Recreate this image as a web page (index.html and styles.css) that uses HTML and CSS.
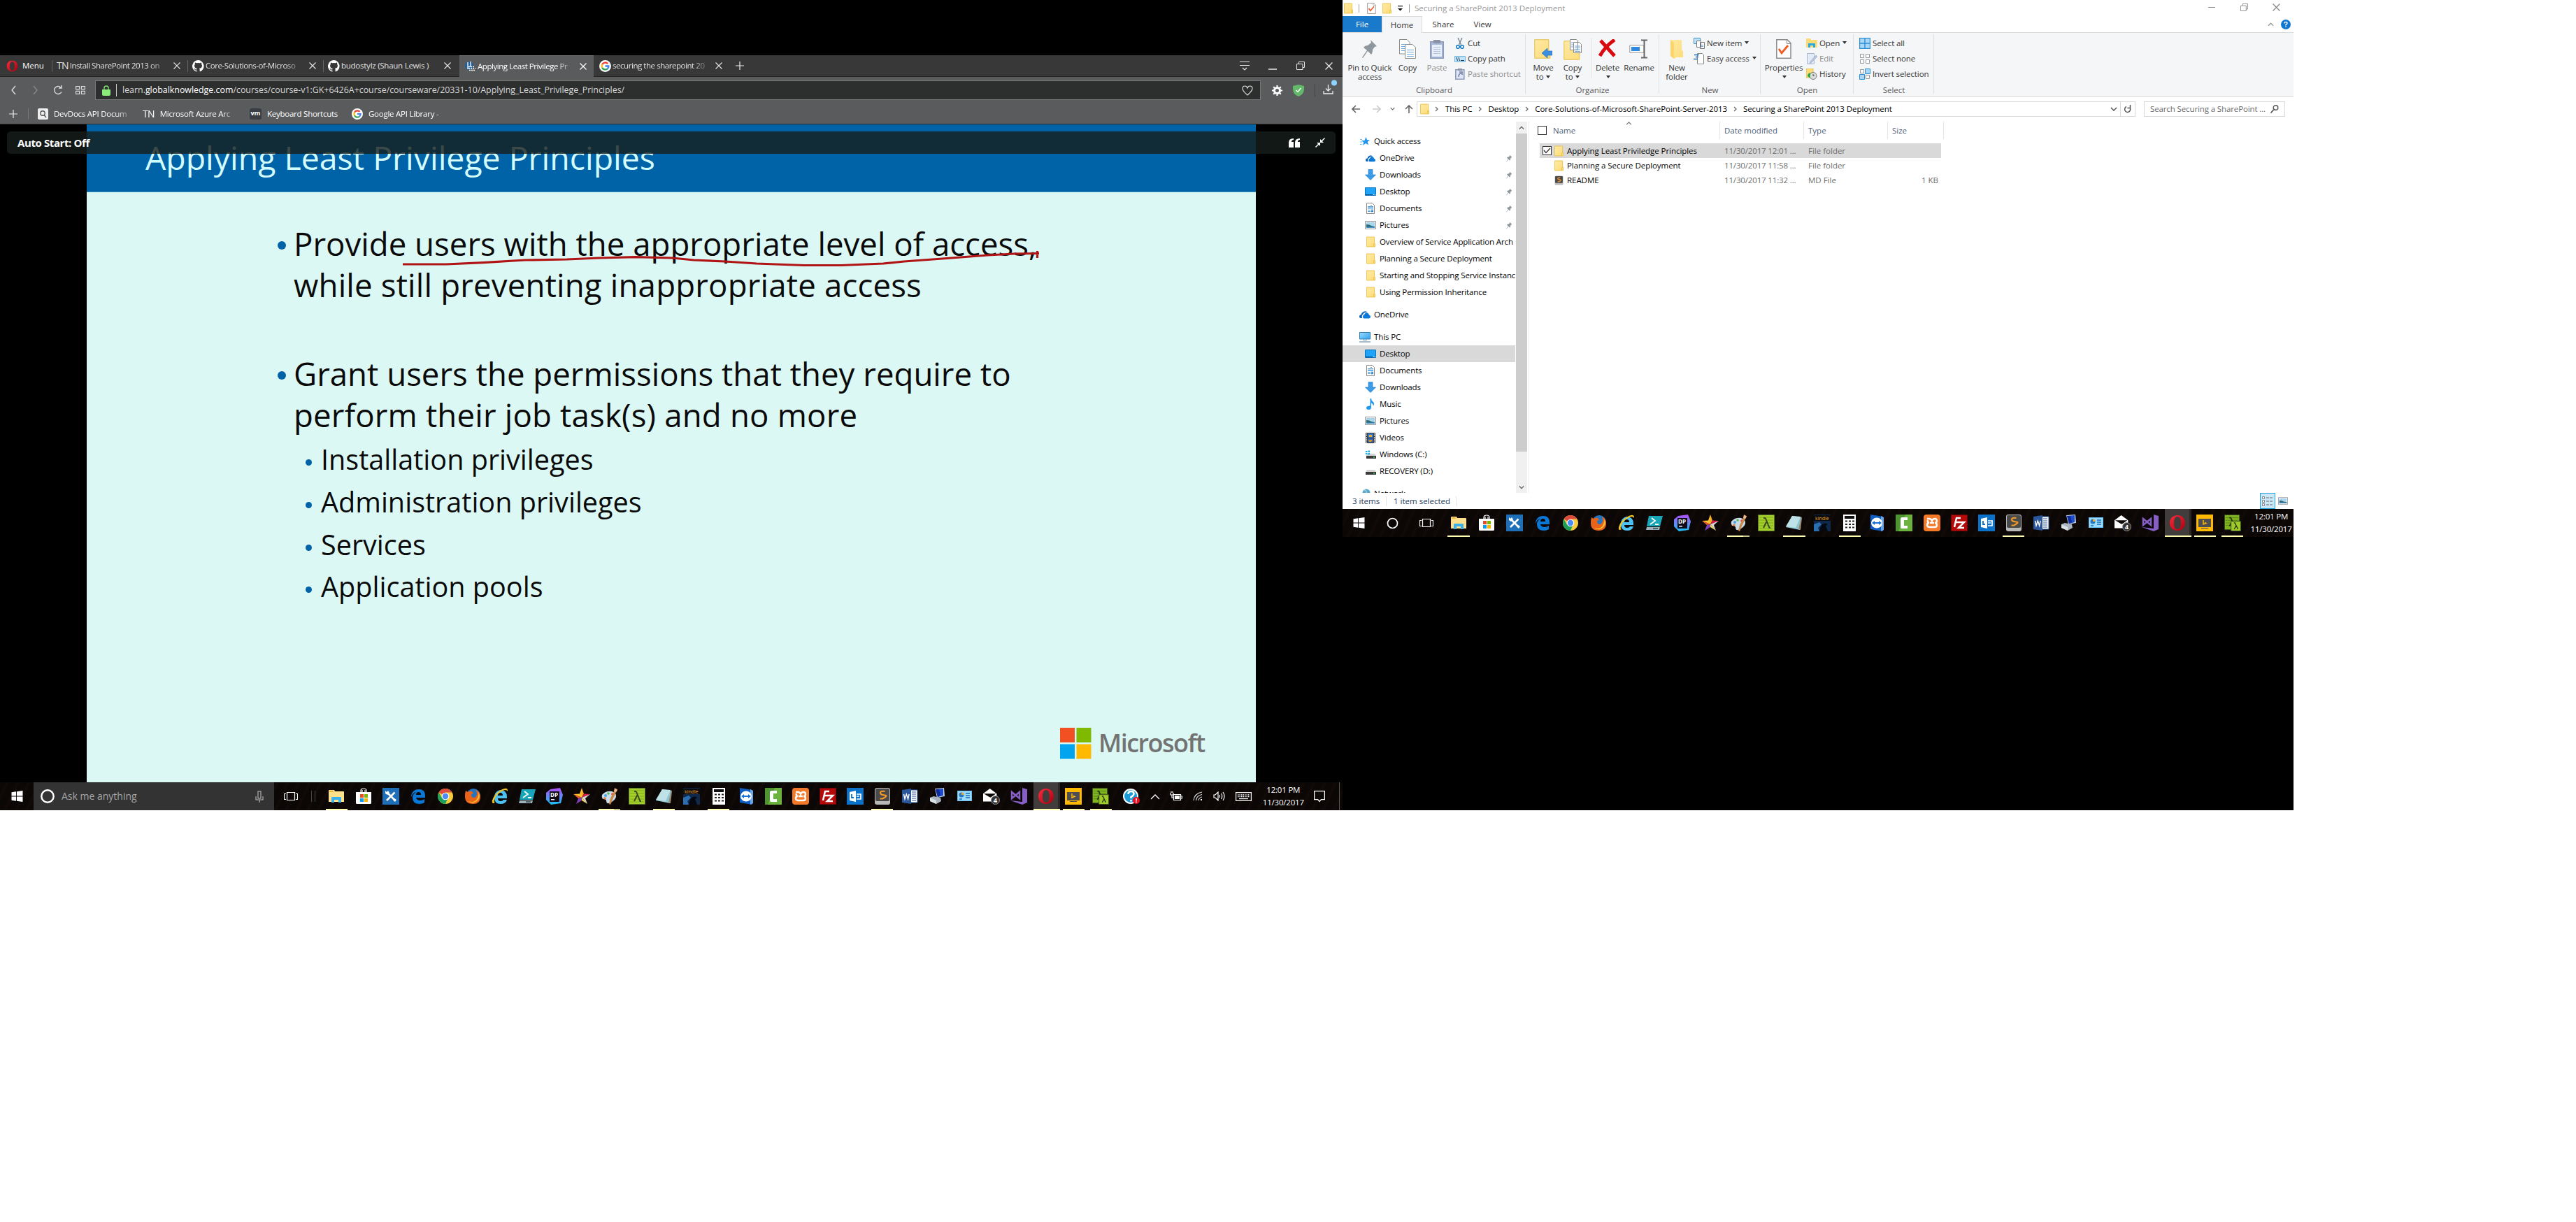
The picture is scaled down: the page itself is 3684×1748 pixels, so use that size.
FILE: index.html
```html
<!DOCTYPE html>
<html lang="en">
<head>
<meta charset="utf-8">
<title>Desktop</title>
<link rel="stylesheet" href="styles.css">
</head>
<body>
<svg class="defs" aria-hidden="true">
<defs>
<linearGradient id="gFolder" x1="0" y1="0" x2="1" y2="1"><stop offset="0" stop-color="#ffeaa5"/><stop offset="1" stop-color="#fddc78"/></linearGradient>
<linearGradient id="gMon" x1="0" y1="0" x2="1" y2="1"><stop offset="0" stop-color="#9bdcff"/><stop offset="1" stop-color="#2ea3ee"/></linearGradient>
<linearGradient id="gRed" x1="0" y1="0" x2="1" y2="1"><stop offset="0" stop-color="#ff2a3c"/><stop offset="1" stop-color="#a6000f"/></linearGradient>
<linearGradient id="gPhp" x1="0" y1="0" x2="0" y2="1"><stop offset="0" stop-color="#b44cf7"/><stop offset="1" stop-color="#19c3f5"/></linearGradient>
<symbol id="folder" viewBox="0 0 14 16"><path d="M.5.5h12v10h1v5H.5z" fill="url(#gFolder)" stroke="#e9c44d"/><path d="M11.5 15.500v-4.500h2" fill="none" stroke="#e9c44d"/></symbol>
<symbol id="win" viewBox="0 0 16 16"><path d="M0 2.300 6.600 1.300v6.200H0zM7.500 1.200 16 0v7.500H7.500zM0 8.400h6.600v6.300L0 13.700zM7.500 8.400H16V16l-8.500-1.200z" fill="#fff"/></symbol>
<symbol id="taskview" viewBox="0 0 20 16"><path d="M4.500 2.500h11v11h-11zM3 4.500H.5v8H3M17 4.500h2.500v8H17" fill="none" stroke="#fff" stroke-width="1.200"/></symbol>
<symbol id="explorer" viewBox="0 0 24 24"><path d="M1 4q0-1 1-1h7l1 2h12q1 0 1 1v14H1z" fill="#ffe08c"/><path d="M2 4h6v2H2z" fill="#e8b93c"/><path d="M5 21v-7q0-1 1-1h12q1 0 1 1v7h-4v-4h-6v4z" fill="#3cb0ea"/></symbol>
<symbol id="store" viewBox="0 0 24 24"><path d="M8 7V4q0-3 4-3t4 3v3M10 6V3M14 6V3" fill="none" stroke="#fff" stroke-width="1.200"/><path d="M1 6h22v15q0 2-1 2H2q-1 0-1-2z" fill="#fff"/><path d="M7 9h5v5H7z" fill="#ec4a23"/><path d="M13 9h5v5h-5z" fill="#7ab800"/><path d="M7 15h5v5H7z" fill="#0c9ded"/><path d="M13 15h5v5h-5z" fill="#fdb400"/></symbol>
<symbol id="tools" viewBox="0 0 24 24"><path d="M0 0h24v24H0z" fill="#1f6fb8"/><path d="m7 7 11 11M6 18 17.500 6.500" stroke="#fff" stroke-width="2.600"/><path d="M4 4v4l3 2 3-3-2-3-2 2zM17 15l3 2-2 3-3-3z" fill="#fff"/></symbol>
<symbol id="edge" viewBox="0 0 24 24"><path d="M2 11Q4 2 13 2q9 0 9 9v3H9q1 4 6 4 3 0 6-2v5q-3 2-7 2-10 0-10-9 0-5 5-8-5 1-7 7zm7-1h7q0-4-3.500-4T9 10z" fill="#0a78d4"/></symbol>
<symbol id="chrome" viewBox="0 0 24 24"><circle cx="12" cy="12" r="11" fill="#f7cb3b"/><path d="M12 12 2.500 6.500A11 11 0 0 1 21.500 6.500H12z" fill="#dd4b3e"/><path d="M12 12 7 14.500 2.500 6.500A11 11 0 0 0 12 23l4-9z" fill="#1a9f5b"/><circle cx="12" cy="12" r="5.300" fill="#fff"/><circle cx="12" cy="12" r="4.200" fill="#4c8bf5"/></symbol>
<symbol id="firefox" viewBox="0 0 24 24"><circle cx="13" cy="11" r="10" fill="#2475c0"/><path d="M2 4l3 2q3-2 6-1l2 3-3 1q0 5 4 5 4-1 4-6l-1-5q6 3 6 10 0 10-11 10T1 12q0-5 1-8z" fill="#e8641b"/><path d="M20 6q3 5 1 9t-7 6q-5 1-8-2 8 3 12-3 3-5 2-10z" fill="#f9c02c"/></symbol>
<symbol id="ie" viewBox="0 0 24 24"><path d="M12 3q10 0 10 10v2H9q0 4 4 4 3 0 4-2h5q-2 6-9 6Q4 23 4 14T12 3zM9 11h7q0-4-3.500-4T9 11z" fill="#4cc1f2"/><path d="M5 21q-5 3-4-3Q3 10 12 4q10-6 11-1v2q-2-4-9 0Q5 11 4 17q-1 4 1 4z" fill="#f6c51f"/></symbol>
<symbol id="ps" viewBox="0 0 24 24"><path d="M4 2h20l-4 15H1z" fill="#18a6b9"/><path d="M1 18h19l-1 4H0z" fill="#9fb0b8"/><path d="m8 5 5 4-7 5M13 14h5" fill="none" stroke="#fff" stroke-width="1.800"/><path d="M10 19h7v2h-7z" fill="#4f6068"/></symbol>
<symbol id="dp" viewBox="0 0 24 24"><path d="M6 2 20 0l4 10-3 12L7 24 0 17V7z" fill="url(#gPhp)"/><path d="M5 5h14v15H5z" fill="#110a18"/><text x="6" y="12.500" class="g-dp">DP</text><path d="M7 16h5v1.500H7z" fill="#fff"/></symbol>
<symbol id="star" viewBox="0 0 24 24"><path d="m12 0 3 8.500L12 14z" fill="#f5a623"/><path d="M12 0 9 8.500 0 9l12 5z" fill="#fbc02d"/><path d="m15 8.500 9 .5-12 5z" fill="#d81b4a"/><path d="m24 9-7 6 3 8-8-9z" fill="#d7d7d7"/><path d="m0 9 7 6 5-1z" fill="#ef5a28"/><path d="m7 15-3 8 8-5v-4z" fill="#7d3fb2"/><path d="m12 18 8 5-8-9z" fill="#f7dc55"/></symbol>
<symbol id="paint" viewBox="0 0 24 24"><path d="M2 10Q7 4 16 5q7 2 6 8-2 6-10 9-4 1-4-4-1-3-5-2-2-3-1-6z" fill="#c9dcea"/><circle cx="7" cy="11" r="2" fill="#4aa3df"/><circle cx="11" cy="8" r="1.800" fill="#5cb85c"/><circle cx="17" cy="9" r="1.800" fill="#e8483c"/><circle cx="6" cy="15" r="1.700" fill="#e5803c"/><path d="m21 1 3 1-7 15-3 7-2-1 2-8z" fill="#c98b4b"/><path d="m20 0 4 3-2 3-3-1z" fill="#ebb98c"/></symbol>
<symbol id="lambda" viewBox="0 0 24 24"><path d="M.5.500h23v23H.5z" fill="#a5d02a" stroke="#55702a"/><path d="M2 4h20M2 8h20M2 12h20M2 16h20M2 20h20" stroke="#7fa91f"/><path d="M8 5h2q1 0 2 3l4 10q0 1 2 1M12.500 10 8 19" fill="none" stroke="#3b4a20" stroke-width="2"/></symbol>
<symbol id="note" viewBox="0 0 24 24"><path d="m9 2 13 2-2 18-20-4z" fill="#8fc4cf"/><path d="m9 2 12 1-7 16L0 17z" fill="#bfe2e8"/><path d="m22 3 1 2-2 17-3-1z" fill="#9a8a74"/></symbol>
<symbol id="kindle" viewBox="0 0 24 24"><path d="M0 0h24v24H0z" fill="#10284a"/><path d="M0 1h24v8H0z" fill="#090b10"/><path d="M12 14q5-3 8 0l-3 2 3 8H8l2-7z" fill="#05080f"/><path d="M0 14l8-3 3 3-5 5 2 5H0z" fill="#2c6fb0"/><text x="2" y="8" class="g-kindle">kindle</text></symbol>
<symbol id="calc" viewBox="0 0 24 24"><path d="M3 0h18v24H3z" fill="#fff"/><path d="M5 2h14v4H5z" fill="#111"/><path d="M6 9.500h3m2 0h3m2 0h3M6 14h3m2 0h3m2 0h3M6 18.500h3m2 0h3m2 0h3" stroke="#222" stroke-width="2"/></symbol>
<symbol id="tv" viewBox="0 0 24 24"><path d="M3 0 21 3v21L3 21z" fill="#0e5ec4"/><path d="m18 2 4 2v18l-4 2z" fill="#6ba5e4"/><ellipse cx="12" cy="12" rx="8" ry="7.500" fill="#fff"/><path d="m5 12 4-3v2h6V9l4 3-4 3v-2H9v2z" fill="#1a72d8"/></symbol>
<symbol id="camtasia" viewBox="0 0 24 24"><path d="M0 0h24v24H0z" fill="#6cb23f"/><path d="M0 0h14L4 24H0z" fill="#4e9431"/><path d="M17 4H9Q7 4 7 7v10q0 3 2 3h8v-4h-5V8h5z" fill="#fff"/></symbol>
<symbol id="xampp" viewBox="0 0 24 24"><rect width="24" height="24" rx="4" fill="#f47a2a"/><path d="M5 6h3q3 0 4 3 1-3 4-3t3 3-3 3q3 0 3 3t-3 3H9q-4 0-4-3t3-3q-3-1-2-4M9 12h6" fill="none" stroke="#fff" stroke-width="2.400"/></symbol>
<symbol id="fz" viewBox="0 0 24 24"><path d="M.5.500h23v23H.5z" fill="#b40a0a" stroke="#7a0505" stroke-dasharray="2 1"/><path d="M14 5H8L5 18M7 11h5M11 11h8l-8 8h8" fill="none" stroke="#fff" stroke-width="2.500"/></symbol>
<symbol id="outlook" viewBox="0 0 24 24"><path d="M0 0h24v24H0z" fill="#0a72c8"/><path d="m4 6 9-2v16l-9-2z" fill="#fff"/><path d="M7 9v5h3" fill="none" stroke="#0a72c8" stroke-width="1.800"/><path d="M14 9h6v7h-6M14 12h4" fill="none" stroke="#fff" stroke-width="1.700"/></symbol>
<symbol id="sublime" viewBox="0 0 24 24"><rect x="1" width="22" height="24" rx="3" fill="#b8b8b8"/><rect x="2" y="1" width="20" height="18" rx="2" fill="#4a4a4a"/><path d="M15.500 5Q9 4 9 7t6 3.500-3 5H8.500" fill="none" stroke="#f59a28" stroke-width="2.200"/></symbol>
<symbol id="word" viewBox="0 0 24 24"><path d="M13 3h10v18H13z" fill="#fff" stroke="#2b579a"/><path d="M15 6h6M15 9h6M15 12h6M15 15h6M15 18h6" stroke="#2b579a"/><path d="m1 3 13-2v22L1 21z" fill="#2b579a"/><path d="m3.500 9 1.500 7 2.300-7 2.300 7 1.500-7" fill="none" stroke="#fff" stroke-width="1.400"/></symbol>
<symbol id="rdp" viewBox="0 0 24 24"><path d="m9 1 13-1 1 12-11 2z" fill="#c5d3e0"/><path d="m10 2 11-1v10l-8 2z" fill="#1f4bd0"/><path d="m10 2 5 0 2 9-4 2z" fill="#0e2b9a"/><path d="m2 14 5-2 10 2 1 5-7 4-9-4z" fill="#a9b4bf"/><path d="m2 14 9 4v5l-9-4z" fill="#d9e0e6"/></symbol>
<symbol id="panel" viewBox="0 0 24 24"><path d="M2 4h21v15H2z" fill="#64bdf0"/><path d="M3 5h19v13H3z" fill="#9bdbff"/><circle cx="8" cy="10" r="3.500" fill="#2477c9"/><path d="M8 10V6.500A3.500 3.500 0 0 1 11.500 10z" fill="#f5a623"/><path d="M14 8h6M14 11h6M14 14h6M5 16h4" stroke="#1c6db8" stroke-width="1.500"/></symbol>
<symbol id="mail" viewBox="0 0 26 26"><path d="m0 9 10.500-8L21 9v12H0z" fill="#fff"/><path d="M1 9h19l-8.500 6-2-1z" fill="#0b0706"/><circle cx="19" cy="19" r="6.500" fill="#333" stroke="#999"/><text x="16" y="23" class="g-four">4</text></symbol>
<symbol id="vs" viewBox="0 0 24 24"><path d="m17 0 7 2v19l-7 3-17-6 17 2z" fill="#865fc5"/><path d="m2 6 11 9V6L2 15z" fill="none" stroke="#865fc5" stroke-width="2.500"/></symbol>
<symbol id="opera" viewBox="0 0 24 24"><path fill-rule="evenodd" d="M12 1c7 0 11 5 11 11s-4 11-11 11S1 18 1 12 5 1 12 1zm0 2C8.500 3 7 7 7 12s1.500 9 5 9 5-4 5-9-1.500-9-5-9z" fill="url(#gRed)"/></symbol>
<symbol id="bing" viewBox="0 0 24 24"><path d="M0 0h24v24H0z" fill="#ffb900"/><path d="M3 6h18v12H3zM7 19h10v1H7z" fill="#4e4e52"/><path d="M10 8v6l4-1.500-2-1" fill="none" stroke="#ffb900" stroke-width="1.500"/></symbol>
<symbol id="lambda2" viewBox="0 0 26 26"><path d="M.5.500h23v23H.5z" fill="#7fb51f" stroke="#3b4a20"/><path d="M2 5h20M2 9h20M2 13h20M2 17h20" stroke="#568013"/><path d="M8 5h2l6 13M12 11 8 18" fill="none" stroke="#26350d" stroke-width="2"/><path d="M10.500 10.500h15v15h-15z" fill="#a0cc2a" stroke="#3b4a20"/><path d="M15 13h1.500l4.500 9.500M18 18l-2.500 4.500" fill="none" stroke="#26350d" stroke-width="1.500"/></symbol>
<symbol id="help" viewBox="0 0 24 24"><circle cx="11" cy="12" r="11" fill="#fff"/><circle cx="11" cy="12" r="9" fill="#1b9bd8"/><path d="M7.500 9q0-4 4-4t4 3.500q0 2-4 4.500v2M11.500 17v2.500" fill="none" stroke="#fff" stroke-width="2.500"/><circle cx="19" cy="18" r="5" fill="#e81123"/><path d="M19 15v3.500M19 19.500v1.500" stroke="#fff" stroke-width="1.500"/></symbol>
<symbol id="github" viewBox="0 0 16 16"><path fill="#fff" d="M8 0a8 8 0 0 0-2.500 15.600c.4.100.5-.2.500-.4V13.700c-2.200.5-2.700-1-2.700-1-.4-.9-.9-1.200-.9-1.200-.7-.5.100-.5.100-.5.800.100 1.200.8 1.200.8.700 1.300 1.900.9 2.300.7.100-.5.300-.9.500-1.100-1.800-.2-3.600-.9-3.600-4 0-.9.300-1.600.8-2.100-.1-.2-.4-1 .1-2.100 0 0 .7-.2 2.200.8a7.500 7.500 0 0 1 4 0c1.500-1 2.200-.8 2.200-.8.400 1.100.2 1.900.1 2.100.5.600.8 1.300.8 2.100 0 3.100-1.900 3.700-3.700 3.900.3.300.6.800.6 1.500v2.200c0 .2.100.5.600.4A8 8 0 0 0 8 0z"/></symbol>
<symbol id="google" viewBox="0 0 16 16"><circle cx="8" cy="8" r="8" fill="#fff"/><g fill="none" stroke-width="2.200"><path d="M11.500 4.800A4.700 4.700 0 0 0 3.900 5.800" stroke="#ea4335"/><path d="M3.900 5.800a4.700 4.700 0 0 0 0 4.400" stroke="#fbbc05"/><path d="M3.900 10.200a4.700 4.700 0 0 0 7.200 1.400" stroke="#34a853"/><path d="M11.100 11.600Q12.700 10 12.600 8H8" stroke="#4285f4"/></g></symbol>
<symbol id="close" viewBox="0 0 10 10"><path d="m.5.500 9 9M9.500.500l-9 9" fill="none" stroke="currentColor" stroke-width="1.200"/></symbol>
<symbol id="plus" viewBox="0 0 12 12"><path d="M6 0v12M0 6h12" stroke="#eee" stroke-width="1.200"/></symbol>
<symbol id="onedrive" viewBox="0 0 16 12"><path d="M0 9q0-3 3-3 0-3 3-4 3-2 6 1-5-1-7 3-2 1-1 5H2Q0 11 0 9z" fill="#0a5fb8"/><path d="M5 9q0-2 2-3 1-3 4-2.500Q13.500 4 14 6.500q2 .5 2 2.500T14 11.500H7Q5 11.500 5 9z" fill="#0a7ad8"/></symbol>
<symbol id="down" viewBox="0 0 16 16"><path d="M5 .500h6V8h4.500L8 15.500.500 8H5z" fill="#3b9be8" stroke="#2a7fc8" stroke-width=".7"/></symbol>
<symbol id="desktop" viewBox="0 0 16 12"><path d="M.5.500h15v11H.5z" fill="#1ea4fb" stroke="#0e72b8"/><path d="M1 10.500h10" stroke="#0a4f8a"/><path d="M12 10.500h3" stroke="#fff" stroke-dasharray="1 1"/></symbol>
<symbol id="docs" viewBox="0 0 12 16"><path d="M.5.500h8l3 3v12H.5z" fill="#fff" stroke="#8a8a8a"/><path d="M2 5.500h8M6 3.500h2M2 10.500h4M2 12.500h4" stroke="#5c9bd0"/><path d="M2 7.500h8M7 10.500h3M7 12.500h3" stroke="#1d86d8" stroke-width="1.500"/></symbol>
<symbol id="pics" viewBox="0 0 16 12"><path d="M.5.500h15v11H.5z" fill="#fff" stroke="#8f979e"/><path d="M2 2h12v8H2z" fill="#a9d5ef"/><path d="M2 5q5 0 7 2l5 1v2H2z" fill="#2f6b72"/><path d="M2 8.500h12V10H2z" fill="#4b8ec2"/></symbol>
<symbol id="pc" viewBox="0 0 16 15"><path d="M.5.500h15v9.500H.5z" fill="url(#gMon)" stroke="#2a7ab0"/><path d="M5 11.500h6" stroke="#9aa"/><path d="M0 14h16" stroke="#8aa4b8" stroke-width="1.500"/></symbol>
<symbol id="music" viewBox="0 0 12 16"><path d="M5.500 0H7q0 3 3 5 2 2 0 6-.5-4-3-4.500V13q0 3-3.500 3T0 13.500q0-3 5.500-3z" fill="#1f98ee"/></symbol>
<symbol id="video" viewBox="0 0 14 15"><path d="M0 0h14v15H0z" fill="#333"/><path d="M1.500 1v14M12.500 1v14" stroke="#fff" stroke-width="1.200" stroke-dasharray="1.500 1"/><path d="M3 1h8v6H3z" fill="#3d78c8"/><path d="M3 8h8v6H3z" fill="#3560b0"/><path d="M5 3h4v3H5z" fill="#e0b030"/><path d="M4 10h6l-2 3H5z" fill="#d09820"/></symbol>
<symbol id="drive" viewBox="0 0 15 12"><path d="M2 4h11l2 3H0z" fill="#d4d4d4"/><path d="M0 7h15v4H0z" fill="#3a3a3a"/><circle cx="12" cy="9" r=".9" fill="#3ddc55"/></symbol>
<symbol id="wdrive" viewBox="0 0 15 12"><path d="M2 5h11l2 3H1z" fill="#d4d4d4"/><path d="M1 8h14v4H1z" fill="#3a3a3a"/><circle cx="12" cy="10" r=".9" fill="#3ddc55"/><path d="M0 1h2.500v2H0zM3.500.500H6V3H3.500zM0 4h2.500v2H0zM3.500 4H6v2.500H3.500z" fill="#12b4f0"/></symbol>
<symbol id="net" viewBox="0 0 16 15"><circle cx="10" cy="6" r="5.500" fill="#5aa9c9"/><path d="M0 6h11v8H0z" fill="#4d86a3"/><path d="M7 2q4 0 3 5" fill="none" stroke="#cfeaf5"/></symbol>
<symbol id="qstar" viewBox="0 0 14 13"><path d="m8.500 0 1.500 4 4 .2-3.200 2.600 1.200 4.600-3.800-2.400L4 12l1.300-4.600L2 5h4.500z" fill="#2196ec"/><path d="M0 3.500h3M0 7h3.500M0 10.500h3" stroke="#6cb9f2"/></symbol>
<symbol id="pin" viewBox="0 0 24 28"><path d="m13 1 9 9-3 1-3 4q0 5-2 7l-5-5-7 10-1-1 7-10-5-4q2-3 6-3l5-4z" fill="#8f979e"/></symbol>
<symbol id="check" viewBox="0 0 22 28"><path d="M.8.800H16l5 5v21.400H.8z" fill="#fff" stroke="#8b8b8b" stroke-width="1.500"/><path d="M15.500 1v5.500H21" fill="none" stroke="#8b8b8b"/><path d="m4 14 4 6 9-11" fill="none" stroke="#f15a22" stroke-width="2.800"/></symbol>
<symbol id="copy" viewBox="0 0 24 28"><g fill="#fff" stroke="#8b8b8b"><path d="M.5.500H11l4 4V21H.5z"/><path d="M8.500 7.500H19l4.500 4.500v15.500h-15z"/></g><path d="M3 7.500h7M3 10.500h5M3 13.500h5M3 16.500h5M11 15.500h10M11 18.500h10M11 21.500h10M11 24.500h10" stroke="#6fa8dc"/></symbol>
<symbol id="paste" viewBox="0 0 20 28"><path d="M.8 3.800h18.400v23.400H.8z" fill="#a9b8d4" stroke="#8c9bbb" stroke-width="1.600"/><path d="M3 8h14v17H3z" fill="#e7eefa"/><path d="M5 1h10v5H5z" fill="#8b93a8"/><path d="M5 11.500h10M5 14.500h10M5 17.500h10M5 20.500h10" stroke="#b3c2df"/></symbol>
<symbol id="moveto" viewBox="0 0 26 28"><path d="M.8.800h20v17h2v9.400H.8z" fill="url(#gFolder)" stroke="#e3bd49"/><path d="m11 20 8-7v4h7v6h-7v4z" fill="#3b8fe0" stroke="#2a6fb8" stroke-width=".7"/></symbol>
<symbol id="copyto" viewBox="0 0 26 30"><path d="M.8 2.800h20v17h2v9.400H.8z" fill="url(#gFolder)" stroke="#e3bd49"/><path d="M9.500.500h9l2 2v13h-11zM14.500 4.500h8l3 3v12h-11z" fill="#fff" stroke="#8b8b8b"/><path d="M16 10h8M16 12.500h8M16 15h8M16 17.500h8M11 5h3M11 8h3M11 11h3" stroke="#6fa8dc"/></symbol>
<symbol id="delete" viewBox="0 0 26 26"><path d="m3 2 20 22M23 1Q10 10 2 24" stroke="#d8090f" stroke-width="5" fill="none"/></symbol>
<symbol id="rename" viewBox="0 0 28 28"><path d="M.8 8.800H21v10.400H.8z" fill="#fff" stroke="#999"/><path d="M3 11h12v6H3z" fill="#2d8ae0"/><path d="M17 1.500h9M17 26.500h9M21.500 2v24" stroke="#666" stroke-width="2"/></symbol>
<symbol id="newfolder" viewBox="0 0 20 28"><path d="M1 1h16v15l2 1v9H9L6 28 1 24z" fill="url(#gFolder)"/><path d="M1 1l5 4v23l-5-4z" fill="#fbd56a"/></symbol>
<symbol id="cut" viewBox="0 0 16 16"><path d="m5 0 4.500 10M11 0 6.500 10" stroke="#7c8b99" stroke-width="1.500"/><circle cx="5" cy="13" r="2.300" fill="none" stroke="#1b7fc4" stroke-width="1.600"/><circle cx="11" cy="13" r="2.300" fill="none" stroke="#1b7fc4" stroke-width="1.600"/></symbol>
<symbol id="cpath" viewBox="0 0 16 16"><path d="M.5 4.500h15v8H.5z" fill="#bfe3fa" stroke="#6fb3dd"/><path d="m3 6 1.500 5M6 6l1.500 5M9 10.500h5" stroke="#234"/></symbol>
<symbol id="shortcut" viewBox="0 0 16 16"><path d="M1.800 1.800h12v13.400h-12z" fill="#dfe7f4" stroke="#8c9bbb" stroke-width="1.600"/><path d="M5 0h6v3H5z" fill="#8b93a8"/><path d="M6 12q0-5 4-5M7 5h4v4" fill="none" stroke="#6f7fa5" stroke-width="1.500"/></symbol>
<symbol id="newitem" viewBox="0 0 16 16"><path d="M.5.500h9v8h-9z" fill="#bfe3fa" stroke="#4c8fb8"/><path d="M4.500 4.500h6v9h-6zM9.500 6.500h6v9h-6z" fill="#fff" stroke="#777"/><path d="M11 10.500h3M11 12.500h3" stroke="#6fa8dc"/></symbol>
<symbol id="easy" viewBox="0 0 16 16"><path d="M5.500.500h7l2 2v13h-9z" fill="#fff" stroke="#888"/><path d="M1 2.500h7M3 5.500h4M0 8.500h6" stroke="#2a6fb8" stroke-width="1.300"/></symbol>
<symbol id="open" viewBox="0 0 16 16"><path d="M0 1h6l1 2h9v11H0z" fill="#fddc78"/><path d="M3 14V8h10v6h-3v-3H6v3z" fill="#29abe2"/></symbol>
<symbol id="edit" viewBox="0 0 16 16"><path d="M1.500.500h10v15h-10z" fill="#e3ebf7" stroke="#a8b6cf"/><path d="m14 3 2 2-9 9-2 1 1-3z" fill="#b9c6de" stroke="#93a3c2" stroke-width=".6"/></symbol>
<symbol id="history" viewBox="0 0 16 16"><path d="M0 0h10v13H0z" fill="#fddc78" stroke="#e3bd49"/><circle cx="10" cy="10.500" r="5" fill="#ddd" stroke="#777"/><path d="M10 8v3l2-2" fill="none" stroke="#555"/><path d="M2 11q0-4 4-5v3q-1 2 0 5z" fill="#27a745"/></symbol>
<symbol id="selall" viewBox="0 0 16 16"><path d="M.5.500h15v15H.5zM8 0v16M0 8h16" fill="#a9d7f7" stroke="#2b8fd8" stroke-width="1.400"/></symbol>
<symbol id="selnone" viewBox="0 0 16 16"><path d="M1.500 1.500h5v5h-5zM9.500 1.500h5v5h-5zM1.500 9.500h5v5h-5zM9.500 9.500h5v5h-5z" fill="#fff" stroke="#999"/></symbol>
<symbol id="selinv" viewBox="0 0 16 16"><path d="M1.500 1.500h5v5h-5zM9.500 9.500h5v5h-5z" fill="#fff" stroke="#999"/><path d="M8.500.500h7v7h-7zM.5 8.500h7v7h-7z" fill="#a9d7f7" stroke="#2b8fd8"/></symbol>
<symbol id="arrow" viewBox="0 0 12 12"><path d="M12 6H1M6 1 1 6l5 5" fill="none" stroke="currentColor" stroke-width="1.600"/></symbol>
<symbol id="chev" viewBox="0 0 10 6"><path d="m1 1 4 4 4-4" fill="none" stroke="currentColor" stroke-width="1.500"/></symbol>
<symbol id="gt" viewBox="0 0 5 8"><path d="m1 1 3 3-3 3" fill="none" stroke="#666" stroke-width="1.300"/></symbol>
<symbol id="restore" viewBox="0 0 12 12"><path d="M3.500 3V.500h8v8H9M.5 3.500H9v8H.5z" fill="none" stroke="currentColor"/></symbol>
</defs>
</svg>

<div class="desk">
<section class="monitor-a">
  <div class="tabs">
    <div class="menu"><svg width="17" height="17"><use href="#opera"/></svg><span>Menu</span></div>
    <div class="tab"><span class="tn">TN</span><span class="label">Install SharePoint 2013 on</span><svg class="x" width="10" height="10"><use href="#close"/></svg></div>
    <div class="tab"><svg width="17" height="17"><use href="#github"/></svg><span class="label">Core-Solutions-of-Microso</span><svg class="x" width="10" height="10"><use href="#close"/></svg></div>
    <div class="tab last"><svg width="17" height="17"><use href="#github"/></svg><span class="label plain">budostylz (Shaun Lewis )</span><svg class="x" width="10" height="10"><use href="#close"/></svg></div>
    <div class="tab active"><svg width="16" height="16" viewBox="0 0 16 16"><circle cx="6" cy="7" r="6" fill="#1f5f9a"/><path d="M4 2v10M8 1v8" stroke="#dfe9f2" stroke-width="1.500"/><path d="M5 8.500h8M5 11h10M6 13.500h9" stroke="#fff" stroke-width="1.500" stroke-dasharray="2 1"/></svg><span class="label">Applying Least Privilege Pr</span><svg class="x" width="10" height="10"><use href="#close"/></svg></div>
    <div class="tab"><svg width="17" height="17"><use href="#google"/></svg><span class="label">securing the sharepoint 20</span><svg class="x" width="10" height="10"><use href="#close"/></svg></div>
    <svg class="newtab" width="12" height="12"><use href="#plus"/></svg>
    <div class="wbtns"><svg width="16" height="14" viewBox="0 0 16 14"><path d="M1 1.500h14M1 6.500h14M5 10l3 3 3-3" fill="none" stroke="currentColor" stroke-width="1.200"/></svg><svg width="12" height="12" viewBox="0 0 12 12"><path d="M0 11h12" stroke="currentColor" stroke-width="1.500"/></svg><svg width="12" height="12"><use href="#restore"/></svg><svg width="11" height="11"><use href="#close"/></svg></div>
  </div>
  <div class="toolbar">
    <div class="nav"><svg width="8" height="14" viewBox="0 0 8 14"><path d="M7 1 2 7l5 6" fill="none" stroke="#ddd" stroke-width="1.400"/></svg><svg width="8" height="14" viewBox="0 0 8 14"><path d="m1 1 5 6-5 6" fill="none" stroke="#8a8a8a" stroke-width="1.400"/></svg><svg width="14" height="14" viewBox="0 0 14 14"><path d="M12 9.500A5.500 5.500 0 1 1 11 3M12 0v4H8" fill="none" stroke="#ddd" stroke-width="1.400"/></svg><svg width="14" height="12" viewBox="0 0 14 12"><path d="M.6.600h5v4h-5zM8.400.600h5v4h-5zM.6 7.400h5v4h-5zM8.400 7.400h5v4h-5z" fill="none" stroke="#ddd" stroke-width="1.100"/></svg></div>
    <div class="url"><svg width="12" height="15" viewBox="0 0 12 15"><path d="M3 7V4q0-3 3-3t3 3v3" fill="none" stroke="#7fe36f" stroke-width="1.400"/><path d="M0 6h12v7q0 2-2 2H2q-2 0-2-2z" fill="#8aea7a"/></svg><span class="addr">learn.<b>globalknowledge.com</b>/courses/course-v1:GK+6426A+course/courseware/20331-10/Applying_Least_Privilege_Principles/</span><svg width="16" height="15" viewBox="0 0 16 15"><path d="M8 14Q1 8 1 4.500 1 1 4.500 1 7 1 8 4q1-3 3.500-3Q15 1 15 4.500 15 8 8 14z" fill="none" stroke="#ddd" stroke-width="1.200"/></svg></div>
    <div class="ext"><svg width="15" height="15" viewBox="0 0 15 15"><circle cx="7.500" cy="7.500" r="4" fill="none" stroke="#fff" stroke-width="3"/><path d="M7.500 0v3M7.500 12v3M0 7.500h3M12 7.500h3M2.200 2.200l2 2M10.800 10.800l2 2M12.800 2.200l-2 2M4.200 10.800l-2 2" stroke="#fff" stroke-width="2"/></svg><svg width="16" height="17" viewBox="0 0 16 17"><path d="m8 0 8 2v4q0 8-8 11Q0 14 0 6V2z" fill="#63b96a"/><path d="m4.500 8 2.500 2.500L11.500 5" fill="none" stroke="#fff" stroke-width="1.500"/></svg><i></i><svg class="dl" width="20" height="22" viewBox="0 0 20 22"><path d="M7.500 7v9M4 12.500 7.500 16l3.500-3.500M1 16v4h13v-4" fill="none" stroke="#eee" stroke-width="1.300"/><circle cx="16" cy="4.500" r="4" fill="#8fd3ff"/></svg></div>
  </div>
  <div class="bookmarks">
    <svg class="bplus" width="12" height="12"><use href="#plus"/></svg><i></i>
    <div class="bm b1"><svg width="15" height="16" viewBox="0 0 15 16"><rect width="15" height="16" rx="2" fill="#eee"/><circle cx="7" cy="7" r="3.200" fill="none" stroke="#555" stroke-width="1.400"/><path d="m9 9.500 3 3.500" stroke="#555" stroke-width="1.500"/></svg><span>DevDocs API Docum</span></div>
    <div class="bm b2"><span class="tn">TN</span><span>Microsoft Azure Arc</span></div>
    <div class="bm b3"><svg width="17" height="16" viewBox="0 0 17 16"><rect width="17" height="16" rx="3" fill="#3a3d44"/><text x="1.500" y="10" class="g-vm">vm</text></svg><span>Keyboard Shortcuts</span></div>
    <div class="bm b4"><svg width="16" height="16"><use href="#google"/></svg><span>Google API Library -</span></div>
  </div>
  <div class="stage">
    <article class="slide">
      <h1>Applying Least Privilege Principles</h1>
      <ul class="points">
        <li><span>Provide users with the appropriate level of access,</span><span class="wide">while still preventing inappropriate access</span></li>
        <li><span>Grant users the permissions that they require to</span><span class="wide">perform their job task(s) and no more</span>
          <ul><li>Installation privileges</li><li>Administration privileges</li><li>Services</li><li>Application pools</li></ul>
        </li>
      </ul>
      <svg class="ink" width="930" height="30" viewBox="570 355 930 30"><path d="M576 378H638L691 375.700 751 372 811 371 857 369 909 367.700 962 369 992 372 1037 374 1082 377 1150 379.500H1203L1263 377 1293 374 1361 369 1413 365 1450 363 1486 362.500M1483.500 359v10" fill="none" stroke="#b01414" stroke-width="3.200"/></svg>
      <div class="logo"><svg width="45" height="45" viewBox="0 0 45 45"><path d="M0 0h21v21H0z" fill="#f25022"/><path d="M23.500 0h21v21h-21z" fill="#7fba00"/><path d="M0 23.500h21v21H0z" fill="#00a4ef"/><path d="M23.500 23.500h21v21h-21z" fill="#ffb900"/></svg><span>Microsoft</span></div>
    </article>
    <div class="overlay"><span>Auto Start: Off</span><svg width="16" height="13" viewBox="0 0 16 13"><path d="M7 0v2Q4 2 4 5h3v8H0V6q0-6 7-6zM16 0v2q-3 0-3 3h3v8H9V6q0-6 7-6z" fill="#fff"/></svg><svg width="14" height="14" viewBox="0 0 14 14"><path d="M14 1 10 5l2 2H7V2l2 2 4-4zM0 13l4-4-2-2h5v5l-2-2-4 4z" fill="#fff"/></svg></div>
  </div>
  <footer class="taskbar ta">
    <div class="start"><svg width="17" height="16"><use href="#win"/></svg></div>
    <div class="cortana"><svg width="20" height="20" viewBox="0 0 20 20"><circle cx="10" cy="10" r="8.700" fill="none" stroke="#fff" stroke-width="2.400"/></svg><span>Ask me anything</span><svg width="12" height="17" viewBox="0 0 12 17"><path d="M4 1h4v10H4zM1 8v5h10V8M6 13v4" fill="none" stroke="#bbb" stroke-width="1.100"/></svg></div>
    <div class="tv"><svg width="20" height="16"><use href="#taskview"/></svg></div>
    <div class="grip"></div>
    <div class="apps">
      <span class="on"><svg><use href="#explorer"/></svg></span><span><svg><use href="#store"/></svg></span><span><svg><use href="#tools"/></svg></span><span><svg><use href="#edge"/></svg></span><span><svg><use href="#chrome"/></svg></span><span><svg><use href="#firefox"/></svg></span><span><svg><use href="#ie"/></svg></span><span><svg><use href="#ps"/></svg></span><span><svg><use href="#dp"/></svg></span><span><svg><use href="#star"/></svg></span><span class="on multi"><svg><use href="#paint"/></svg></span><span><svg><use href="#lambda"/></svg></span><span class="on"><svg><use href="#note"/></svg></span><span><svg><use href="#kindle"/></svg></span><span class="on"><svg><use href="#calc"/></svg></span><span><svg><use href="#tv"/></svg></span><span><svg><use href="#camtasia"/></svg></span><span><svg><use href="#xampp"/></svg></span><span><svg><use href="#fz"/></svg></span><span><svg><use href="#outlook"/></svg></span><span class="on"><svg><use href="#sublime"/></svg></span><span><svg><use href="#word"/></svg></span><span><svg><use href="#rdp"/></svg></span><span><svg><use href="#panel"/></svg></span><span><svg><use href="#mail"/></svg></span><span><svg><use href="#vs"/></svg></span><span class="on cur"><svg><use href="#opera"/></svg></span><span class="on"><svg><use href="#bing"/></svg></span><span class="on"><svg><use href="#lambda2"/></svg></span>
    </div>
    <div class="tray"><svg width="24" height="24"><use href="#help"/></svg><svg width="14" height="9" viewBox="0 0 14 9"><path d="m1 8 6-6 6 6" fill="none" stroke="#fff" stroke-width="1.300"/></svg><svg width="18" height="14" viewBox="0 0 18 14"><path d="M5.500 4.500h10v8h-10zM16 7h1.500v3H16M1 2v3h4V2M2 0v2M4 0v2M3 5v4h3" fill="none" stroke="#fff" stroke-width="1.200"/><path d="M7 6h7v5H7z" fill="#fff"/></svg><svg width="14" height="14" viewBox="0 0 14 14"><path d="M1 13Q2 3 13 1M4.500 13Q5 6 13 4.500M8 13q.5-4 5-5" fill="none" stroke="#ddd" stroke-width="1.200"/><path d="M11 11h2v2h-2z" fill="#fff"/></svg><svg width="17" height="14" viewBox="0 0 17 14"><path d="M1 5h2l4-4v12L3 9H1zM9 5q1 2 0 4M11.500 3q2.500 4 0 8M14 1q4 6 0 12" fill="none" stroke="#fff" stroke-width="1.200"/></svg><svg width="23" height="13" viewBox="0 0 23 13"><path d="M.6.600h21.800v11.800H.6z" fill="none" stroke="#fff" stroke-width="1.200"/><path d="M3 4h17M3 6.500h17" stroke="#fff" stroke-width="1.400" stroke-dasharray="1.500 1"/><path d="M5 9.500h13" stroke="#fff" stroke-width="1.300"/></svg><div class="clock"><span>12:01 PM</span><span>11/30/2017</span></div><svg width="16" height="17" viewBox="0 0 16 17"><path d="M.6.600h14.800v12h-5L8 15.500l-2.400-2.900h-5z" fill="none" stroke="#fff" stroke-width="1.300"/></svg></div>
  </footer>
</section>

<section class="monitor-b">
  <div class="titlebar"><svg width="13" height="16"><use href="#folder"/></svg><i></i><svg width="13" height="16"><use href="#check"/></svg><svg width="13" height="16"><use href="#folder"/></svg><svg class="qat" width="7" height="8" viewBox="0 0 7 8"><path d="M0 .7h7" stroke="#111" stroke-width="1.200"/><path d="M0 4h7L3.500 7.500z" fill="#111"/></svg><i></i><span>Securing a SharePoint 2013 Deployment</span>
    <div class="wctl"><svg width="11" height="11" viewBox="0 0 11 11"><path d="M0 5.500h10" stroke="currentColor"/></svg><svg width="11" height="11"><use href="#restore"/></svg><svg width="11" height="11"><use href="#close"/></svg></div></div>
  <div class="rtabs"><span class="file">File</span><span class="home">Home</span><span class="share">Share</span><span class="view">View</span><svg class="up" width="9" height="6"><use href="#chev"/></svg><svg width="14" height="14" viewBox="0 0 14 14"><circle cx="7" cy="7" r="7" fill="#0f77d0"/><path d="M5 5.500Q5 3.500 7 3.500t2 1.700Q9 6.500 7 7.500v1M7 9.500V11" fill="none" stroke="#fff" stroke-width="1.400"/></svg></div>
  <div class="ribbon">
    <div class="grp clip"><div class="items"><div class="big w70"><svg width="24" height="28"><use href="#pin"/></svg><span>Pin to Quick</span><span>access</span></div><div class="big w38"><svg width="24" height="28"><use href="#copy"/></svg><span>Copy</span></div><div class="big w46 off"><svg width="20" height="28"><use href="#paste"/></svg><span>Paste</span></div><div class="small"><p><svg><use href="#cut"/></svg>Cut</p><p><svg><use href="#cpath"/></svg>Copy path</p><p class="off"><svg><use href="#shortcut"/></svg>Paste shortcut</p></div></div><b>Clipboard</b></div>
    <div class="grp org"><div class="items"><div class="big w42"><svg width="26" height="28"><use href="#moveto"/></svg><span>Move</span><span>to <i></i></span></div><div class="big w42"><svg width="26" height="30"><use href="#copyto"/></svg><span>Copy</span><span>to <i></i></span></div><div class="vsep"></div><div class="big w46"><svg width="26" height="26"><use href="#delete"/></svg><span>Delete</span><span><i></i></span></div><div class="big w44"><svg width="28" height="28"><use href="#rename"/></svg><span>Rename</span></div></div><b>Organize</b></div>
    <div class="grp new"><div class="items"><div class="big w42"><svg width="20" height="28"><use href="#newfolder"/></svg><span>New</span><span>folder</span></div><div class="small"><p><svg><use href="#newitem"/></svg>New item <i></i></p><p><svg><use href="#easy"/></svg>Easy access <i></i></p></div></div><b>New</b></div>
    <div class="grp opn"><div class="items"><div class="big w58"><svg width="22" height="28"><use href="#check"/></svg><span>Properties</span><span><i></i></span></div><div class="small"><p><svg><use href="#open"/></svg>Open <i></i></p><p class="off"><svg><use href="#edit"/></svg>Edit</p><p><svg><use href="#history"/></svg>History</p></div></div><b>Open</b></div>
    <div class="grp sel"><div class="items"><div class="small"><p><svg><use href="#selall"/></svg>Select all</p><p><svg><use href="#selnone"/></svg>Select none</p><p><svg><use href="#selinv"/></svg>Invert selection</p></div></div><b>Select</b></div>
  </div>
  <div class="addrbar">
    <div class="anav"><svg width="12" height="12"><use href="#arrow"/></svg><svg class="fwd" width="12" height="12"><use href="#arrow"/></svg><svg width="7" height="5"><use href="#chev"/></svg><svg class="upa" width="12" height="12"><use href="#arrow"/></svg></div>
    <div class="crumbs"><svg width="13" height="16"><use href="#folder"/></svg><svg class="g"><use href="#gt"/></svg><span>This PC</span><svg class="g"><use href="#gt"/></svg><span>Desktop</span><svg class="g"><use href="#gt"/></svg><span>Core-Solutions-of-Microsoft-SharePoint-Server-2013</span><svg class="g"><use href="#gt"/></svg><span>Securing a SharePoint 2013 Deployment</span><svg class="dd" width="10" height="6"><use href="#chev"/></svg><div class="refresh"><svg width="10" height="12" viewBox="0 0 10 12"><path d="M3 2.500A4 4.200 0 1 0 8 4M8.500 0v4.500H4.500" fill="none" stroke="#555" stroke-width="1.500"/></svg></div></div>
    <div class="search"><span>Search Securing a SharePoint ...</span><svg width="12" height="12" viewBox="0 0 12 12"><circle cx="7.500" cy="4" r="3.300" fill="none" stroke="#555" stroke-width="1.400"/><path d="M5 6.500.500 11.500" stroke="#555" stroke-width="1.700"/></svg></div>
  </div>
  <div class="body">
    <div class="tree">
      <p class="root"><svg width="14" height="13"><use href="#qstar"/></svg><span>Quick access</span></p>
      <p><svg width="14" height="11"><use href="#onedrive"/></svg><span>OneDrive</span><svg class="pn"><use href="#pin"/></svg></p>
      <p><svg width="16" height="16"><use href="#down"/></svg><span>Downloads</span><svg class="pn"><use href="#pin"/></svg></p>
      <p><svg width="16" height="12"><use href="#desktop"/></svg><span>Desktop</span><svg class="pn"><use href="#pin"/></svg></p>
      <p><svg width="12" height="16"><use href="#docs"/></svg><span>Documents</span><svg class="pn"><use href="#pin"/></svg></p>
      <p><svg width="16" height="12"><use href="#pics"/></svg><span>Pictures</span><svg class="pn"><use href="#pin"/></svg></p>
      <p><svg width="13" height="16"><use href="#folder"/></svg><span>Overview of Service Application Arch</span></p>
      <p><svg width="13" height="16"><use href="#folder"/></svg><span>Planning a Secure Deployment</span></p>
      <p><svg width="13" height="16"><use href="#folder"/></svg><span>Starting and Stopping Service Instanc</span></p>
      <p><svg width="13" height="16"><use href="#folder"/></svg><span>Using Permission Inheritance</span></p>
      <p class="root gap"><svg width="16" height="12"><use href="#onedrive"/></svg><span>OneDrive</span></p>
      <p class="root gap"><svg width="16" height="15"><use href="#pc"/></svg><span>This PC</span></p>
      <p class="sel"><svg width="16" height="12"><use href="#desktop"/></svg><span>Desktop</span></p>
      <p><svg width="12" height="16"><use href="#docs"/></svg><span>Documents</span></p>
      <p><svg width="16" height="16"><use href="#down"/></svg><span>Downloads</span></p>
      <p><svg width="12" height="16"><use href="#music"/></svg><span>Music</span></p>
      <p><svg width="16" height="12"><use href="#pics"/></svg><span>Pictures</span></p>
      <p><svg width="14" height="15"><use href="#video"/></svg><span>Videos</span></p>
      <p><svg width="15" height="12"><use href="#wdrive"/></svg><span>Windows (C:)</span></p>
      <p><svg width="15" height="12"><use href="#drive"/></svg><span>RECOVERY (D:)</span></p>
      <p class="root gap"><svg width="16" height="15"><use href="#net"/></svg><span>Network</span></p>
    </div>
    <div class="scroll"><svg class="flip" width="8" height="6"><use href="#chev"/></svg><div class="thumb"></div><svg width="8" height="6"><use href="#chev"/></svg></div>
    <div class="files">
      <svg class="sort" width="9" height="5"><use href="#chev"/></svg>
      <div class="head"><i class="box"></i><span class="n">Name</span><span class="d">Date modified</span><span class="t">Type</span><span class="s">Size</span></div>
      <div class="row selected"><i class="box"><svg width="11" height="9" viewBox="0 0 11 9"><path d="m1 4 3 3.500L10 1" fill="none" stroke="#333" stroke-width="1.300"/></svg></i><svg width="13" height="16"><use href="#folder"/></svg><span class="n">Applying Least Priviledge Principles</span><span class="d">11/30/2017 12:01 ...</span><span class="t">File folder</span><span class="s"></span></div>
      <div class="row"><i class="box none"></i><svg width="13" height="16"><use href="#folder"/></svg><span class="n">Planning a Secure Deployment</span><span class="d">11/30/2017 11:58 ...</span><span class="t">File folder</span><span class="s"></span></div>
      <div class="row"><i class="box none"></i><svg width="13" height="14"><use href="#sublime"/></svg><span class="n">README</span><span class="d">11/30/2017 11:32 ...</span><span class="t">MD File</span><span class="s">1 KB</span></div>
    </div>
  </div>
  <div class="status"><span class="s1">3 items</span><span class="s2">1 item selected</span><div class="views"><div><svg width="16" height="16" viewBox="0 0 16 16"><path d="M.5 1.500h3v3h-3zM.5 6.500h3v3h-3zM.5 11.500h3v3h-3z" fill="#fff" stroke="#888"/><path d="M6 3h10M6 8h10M6 13h10" stroke="#666" stroke-dasharray="4 1"/></svg></div><svg width="14" height="13"><use href="#pics"/></svg></div></div>
  <footer class="taskbar tb">
    <div class="start"><svg width="17" height="16"><use href="#win"/></svg></div>
    <div class="ring"><svg width="17" height="17" viewBox="0 0 17 17"><circle cx="8.500" cy="8.500" r="7" fill="none" stroke="#fff" stroke-width="1.700"/></svg></div>
    <div class="tv"><svg width="20" height="16"><use href="#taskview"/></svg></div>
    <div class="apps">
      <span class="on"><svg><use href="#explorer"/></svg></span><span><svg><use href="#store"/></svg></span><span><svg><use href="#tools"/></svg></span><span><svg><use href="#edge"/></svg></span><span><svg><use href="#chrome"/></svg></span><span><svg><use href="#firefox"/></svg></span><span><svg><use href="#ie"/></svg></span><span><svg><use href="#ps"/></svg></span><span><svg><use href="#dp"/></svg></span><span><svg><use href="#star"/></svg></span><span class="on multi"><svg><use href="#paint"/></svg></span><span><svg><use href="#lambda"/></svg></span><span class="on"><svg><use href="#note"/></svg></span><span><svg><use href="#kindle"/></svg></span><span class="on"><svg><use href="#calc"/></svg></span><span><svg><use href="#tv"/></svg></span><span><svg><use href="#camtasia"/></svg></span><span><svg><use href="#xampp"/></svg></span><span><svg><use href="#fz"/></svg></span><span><svg><use href="#outlook"/></svg></span><span class="on"><svg><use href="#sublime"/></svg></span><span><svg><use href="#word"/></svg></span><span><svg><use href="#rdp"/></svg></span><span><svg><use href="#panel"/></svg></span><span><svg><use href="#mail"/></svg></span><span><svg><use href="#vs"/></svg></span><span class="on cur"><svg><use href="#opera"/></svg></span><span class="on"><svg><use href="#bing"/></svg></span><span class="on"><svg><use href="#lambda2"/></svg></span>
    </div>
    <div class="clock"><span>12:01 PM</span><span>11/30/2017</span></div>
  </footer>
</section>
</div>
</body>
</html>
```
FILE: styles.css
```css
* { box-sizing: border-box; }
body { margin: 0; background: #fff; font: 11.5px/14px "Open Sans", "Noto Sans", sans-serif; color: #000; }
p, ul, h1 { margin: 0; padding: 0; }
svg { display: block; flex: none; }
span { white-space: pre; }
.defs { position: absolute; width: 0; height: 0; }
.desk { width: 3280px; height: 1159px; background: #000; display: flex; align-items: flex-start; }

/* left monitor: browser */
.monitor-a { width: 1920px; height: 1159px; padding-top: 79px; display: flex; flex-direction: column; color: #f2f2f2; }
.tabs { height: 31px; background: #383838; border-bottom: 1px solid #222; display: flex; align-items: stretch; }
.menu { width: 74px; padding-left: 9px; display: flex; align-items: center; gap: 6px; color: #fff; }
.tab { width: 194px; padding: 0 10px 0 7px; display: flex; align-items: center; gap: 2px; position: relative; color: #e2e2e2; }
.tab::before { content: ""; position: absolute; left: 0; top: 7px; height: 17px; width: 1px; background: #666; }
.tab.last { width: 195px; padding-right: 12px; }
.tab.active { width: 192px; background: #5a5b5d; color: #fff; height: 31px; padding-left: 8px; padding-right: 10px; border-top: 1px solid #6a6a6a; }
.tab.active::before, .tab.active + .tab::before { display: none; }
.tab.active + .tab { width: 195px; padding-left: 8px; padding-right: 11px; }
.label { flex: 1; letter-spacing: -.45px; mask-image: linear-gradient(90deg, #000 78%, rgba(0, 0, 0, .15) 95%); }
.label.plain { mask-image: none; letter-spacing: -.25px; }
.tn { font-size: 14px; letter-spacing: -.8px; }
.newtab { align-self: center; margin-left: 8px; }
.wbtns { margin-left: auto; width: 160px; display: grid; grid-template-columns: repeat(4, 40px); justify-items: center; align-items: center; color: #e8e8e8; }
.toolbar { height: 38px; background: #5a5b5d; display: flex; align-items: center; }
.nav { width: 136px; padding-left: 3px; display: grid; grid-template-columns: repeat(4, 32px); justify-items: center; align-items: center; }
.url { width: 1667px; height: 28px; background: #2d2e2e; border: 1px solid #777; display: flex; align-items: center; padding: 0 10px 0 9px; color: #d8d8d8; }
.addr { margin-left: 8px; border-left: 1px solid #ccc; padding-left: 8px; flex: 1; line-height: 18px; font-size: 12.4px; }
.addr b { font-weight: 400; color: #fff; }
.ext { flex: 1; padding-left: 16px; display: flex; align-items: center; }
.ext svg + svg { margin-left: 15px; }
.ext i { width: 1px; height: 19px; background: #444; margin: 0 11px 0 15px; }
.ext .dl { margin-top: -8px; }
.bookmarks { height: 30px; background: #5a5b5d; border-bottom: 1px solid #2a2a2a; display: flex; align-items: center; color: #fff; letter-spacing: -.25px; }
.bplus { margin-left: 13px; }
.bookmarks > i { width: 1px; height: 16px; background: #777; margin: 0 13px 0 15px; }
.bm { display: flex; align-items: center; gap: 8px; }
.b1 { width: 132px; margin-right: 18px; }
.b1, .b2 { mask-image: linear-gradient(90deg, #000 85%, rgba(0, 0, 0, .2)); }
.b2 { width: 133px; margin-right: 20px; }
.b3 { width: 128px; margin-right: 18px; }
.b4 { width: 131px; mask-image: linear-gradient(90deg, #000 90%, rgba(0, 0, 0, .3)); }
.stage { flex: 1; position: relative; display: flex; padding-left: 124px; }
.slide { width: 1672px; background: #dcf8f4; color: #0a0a0a; display: flex; flex-direction: column; position: relative; }
.slide h1 { height: 97px; background: #0062a7; color: #d3fbfb; font-weight: 400; font-size: 46.4px; line-height: 60px; padding: 17px 0 0 84px; border-bottom: 1px solid #3f8fb8; }
.points { list-style: none; font-size: 45.6px; line-height: 58.5px; padding: 44px 0 0 296px; }
.points > li { margin-bottom: 69px; position: relative; }
.points > li > span { display: block; }
.points > li > .wide { letter-spacing: .17px; }
.points li::before { content: ""; position: absolute; border-radius: 50%; background: #0062a7; width: 12px; height: 12px; left: -23px; top: 26px; }
.points ul { list-style: none; font-size: 39.6px; line-height: 60.8px; padding: 5px 0 0 39px; }
.points ul li { position: relative; }
.points ul li::before { width: 9px; height: 9px; left: -22px; top: 30px; }
.ink { position: absolute; left: 446px; top: 177px; }
.logo { position: absolute; left: 1392px; top: 863px; display: flex; gap: 10px; }
.logo span { font-size: 36px; line-height: 44px; font-weight: 600; letter-spacing: -1.5px; color: #737373; }
.overlay { position: absolute; left: 10px; right: 10px; top: 10px; height: 32px; border-radius: 5px; background: rgba(21, 30, 28, .8); display: flex; align-items: center; padding: 0 15px; }
.overlay span { font: 700 15px/20px "Open Sans", sans-serif; letter-spacing: -.4px; color: #fff; flex: 1; }
.overlay svg + svg { margin-left: 22px; }

/* taskbars */
.taskbar { height: 40px; background: repeating-linear-gradient(115deg, #0b0706 0 7px, #120a07 9px, #0a0605 14px); display: flex; align-items: stretch; color: #fff; flex: none; }
.taskbar > div { display: flex; align-items: center; }
.start { width: 48px; justify-content: center; }
.cortana { width: 344px; background: #333; padding: 0 15px 0 10px; gap: 10px; }
.cortana span { flex: 1; font-size: 14px; color: #a6a6a6; }
.tv { width: 48px; justify-content: center; }
.grip { width: 21.5px; }
.grip::before { content: ""; margin-left: 5px; width: 4px; height: 16px; border: solid #444; border-width: 0 1px; }
.apps span { width: 39.05px; height: 40px; display: flex; justify-content: center; align-items: center; position: relative; }
.apps svg { width: 24px; height: 24px; position: relative; }
.apps .on::after { content: ""; position: absolute; left: 4px; right: 4px; bottom: 0; height: 2px; background: #ffffb4; }
.apps .multi::after { background: linear-gradient(90deg, #ffffb4 72%, #c5c58c 72%); }
.apps .cur::before { content: ""; position: absolute; inset: 0 0 0 1px; background: linear-gradient(90deg, #413d3c 92%, #2b2726 92%); }
.apps .cur::after { left: 1px; right: 0; }
.tray { flex: 1; justify-content: space-between; padding: 0 20px 0 12px; border-right: 1px solid #555; margin-right: 4px; }
.taskbar .clock, .tray .clock { display: flex; flex-direction: column; justify-content: center; align-items: center; line-height: 18px; letter-spacing: -.2px; }
.tray .clock { width: 58px; margin-left: 2px; }
.tb .clock { width: 64px; margin-left: 4px; }
.tb .ring { width: 48px; justify-content: center; }
.tb .tv { width: 48px; }
.tb .apps { padding-left: 2px; }
.tb .apps span { width: 40px; }
.tb .apps span:nth-child(n+15) { width: 39.1px; }

/* right monitor: file explorer */
.monitor-b { width: 1360px; height: 768px; background: #fff; display: flex; flex-direction: column; }
.titlebar { height: 23px; display: flex; align-items: center; padding-left: 2px; color: #999; }
.titlebar i { width: 1px; height: 12px; background: #999; margin: 0 11px 0 8px; }
.titlebar svg + svg { margin-left: 9px; }
.titlebar .qat + i { margin: 0 7px 0 9px; }
.titlebar .wctl { margin: -3px 2px 0 auto; width: 137px; display: grid; grid-template-columns: repeat(3, 1fr); justify-items: center; color: #888; }
.titlebar .wctl svg + svg { margin: 0; }
.rtabs { height: 24px; display: flex; align-items: center; color: #333; border-bottom: 1px solid #dadbdc; position: relative; }
.rtabs span { line-height: 23px; text-align: center; }
.rtabs .file { width: 56px; background: #1979ca; color: #fff; align-self: flex-start; }
.rtabs .home { width: 58px; height: 24px; background: #f5f6f7; border: 1px solid #dadbdc; border-bottom: 0; }
.rtabs .share { width: 60px; }
.rtabs .view { width: 52px; }
.rtabs .up { transform: scaleY(-1); margin: 0 10px 0 auto; color: #999; }
.rtabs svg:last-child { margin-right: 4px; }
.ribbon { height: 92px; background: #f5f6f7; border-bottom: 1px solid #dadbdc; display: flex; color: #333; }
.grp { position: relative; display: flex; flex-direction: column; }
.grp::after { content: ""; position: absolute; right: 0; top: 2px; bottom: 4px; width: 1px; background: #dfe0e2; }
.grp b { font-weight: 400; text-align: center; line-height: 18px; color: #5b5b5b; }
.clip { width: 262px; } .org { width: 191px; } .new { width: 145px; } .opn { width: 133px; } .sel.grp { width: 115px; }
.items { flex: 1; display: flex; padding-left: 4px; }
.big { padding-top: 8px; display: grid; grid-template-rows: 35px 13px 13px; align-content: start; justify-items: center; line-height: 13px; }
.big svg { margin-top: 1px; }
.big span, .small p { letter-spacing: -.1px; }
.w38 { width: 38px; } .w42 { width: 42px; } .w44 { width: 44px; } .w46 { width: 46px; } .w58 { width: 58px; } .w70 { width: 70px; }
.off { color: #8d8d8d; }
.vsep { width: 1px; margin: 8px 0 8px 5px; background: #dfe0e2; }
.small { padding: 4px 0 0 3px; }
.small p { height: 22px; display: flex; align-items: center; gap: 3px; white-space: nowrap; }
.small svg { width: 16px; height: 16px; }
.sel .small { padding-left: 4px; }
.clip .small { padding-left: 2px; }
.big i, .small i { display: inline-block; border: 3px solid transparent; border-top: 4px solid #333; border-bottom: 0; margin: 0 0 2px 1px; }
.addrbar { height: 35px; display: flex; align-items: center; padding-bottom: 2px; }
.anav { width: 106px; display: flex; align-items: center; padding-left: 13px; color: #666; }
.anav .fwd { transform: scaleX(-1); color: #ccc; margin: 0 13px 0 18px; }
.anav .upa { transform: rotate(90deg); margin-left: 14px; }
.crumbs { width: 1028px; height: 22px; border: 1px solid #d9d9d9; display: flex; align-items: center; padding-left: 4px; letter-spacing: -.07px; }
.crumbs .g { width: 5px; height: 8px; margin: 0 9px; }
.crumbs svg:first-child + .g { margin-left: 8px; margin-right: 10px; }
.crumbs .dd { margin: 0 4px 0 auto; color: #555; }
.refresh { width: 21px; height: 20px; border-left: 1px solid #d9d9d9; display: grid; place-items: center; }
.search { width: 202px; height: 22px; margin-left: 12px; border: 1px solid #d9d9d9; display: flex; align-items: center; justify-content: space-between; padding: 0 8px; color: #6d6d6d; letter-spacing: -.12px; }
.body { height: 531px; display: flex; overflow: hidden; }
.tree { width: 248px; padding-top: 16px; }
.tree p { height: 24px; width: 247px; display: grid; grid-template-columns: 24px 1fr 16px; align-items: center; padding-left: 28px; overflow: hidden; letter-spacing: -.12px; }
.tree p > svg:first-child { justify-self: center; }
.tree span { padding-left: 1px; }
.tree .root { padding-left: 20px; }
.tree .gap { margin-top: 8px; }
.tree .sel { background: #d9d9d9; }
.tree .pn { width: 11px; height: 11px; margin-left: 2px; }
.scroll { width: 16px; background: #f0f0f0; display: flex; flex-direction: column; align-items: center; justify-content: space-between; padding: 6px 0 5px; color: #505050; }
.scroll .thumb { width: 16px; height: 455px; background: #cdcdcd; margin: 5px 0 auto; }
.flip { transform: scaleY(-1); }
.files { margin-left: 2px; border-left: 1px solid #ededed; flex: 1; position: relative; }
.sort { position: absolute; left: 138px; top: 0; transform: scaleY(-1); color: #777; }
.head { height: 25px; margin-bottom: 6px; display: flex; align-items: center; padding-left: 12px; color: #4c607a; }
.box { width: 13px; height: 13px; border: 1px solid #333; background: #fff; display: grid; place-items: center; flex: none; }
.box.none { visibility: hidden; }
.head .n { width: 248px; padding-left: 9px; }
.head .d { width: 120px; } .head .t { width: 120px; } .head .s { width: 80px; }
.head .n, .head .d, .head .t, .head .s { border-right: 1px solid #e5e5e5; line-height: 25px; }
.head .d, .head .t, .head .s { padding-left: 6px; }
.row { height: 21px; width: 574px; margin-left: 15px; padding-left: 4px; display: flex; align-items: center; color: #6d6d6d; }
.row.selected { background: #d9d9d9; }
.row > svg { margin-left: 4px; }
.row .n { width: 230px; padding-left: 5px; color: #000; letter-spacing: -.05px; }
.row .d { width: 120px; letter-spacing: -.15px; } .row .t { width: 120px; } .row .s { width: 66px; text-align: right; }
.status { height: 23px; display: flex; align-items: center; color: #1e395b; padding-left: 14px; }
.status .s1, .status .s2 { border-right: 1px solid #e5e5e5; }
.s1 { width: 49px; }
.s2 { width: 100px; padding-left: 10px; }
.views { margin: 0 8px 0 auto; display: flex; align-items: center; gap: 4px; }
.views div { width: 22px; height: 23px; background: #cbe8f8; border: 1px solid #26a0da; display: grid; place-items: center; }

/* lettering inside app icons */
.g-dp { font: 700 8px "Open Sans", sans-serif; fill: #fff; }
.g-kindle { font: 7px "Open Sans", sans-serif; fill: #f5a623; }
.g-four { font: 700 10px "Open Sans", sans-serif; fill: #fff; }
.g-vm { font: 700 9px "Open Sans", sans-serif; fill: #fff; letter-spacing: 0; }
```
